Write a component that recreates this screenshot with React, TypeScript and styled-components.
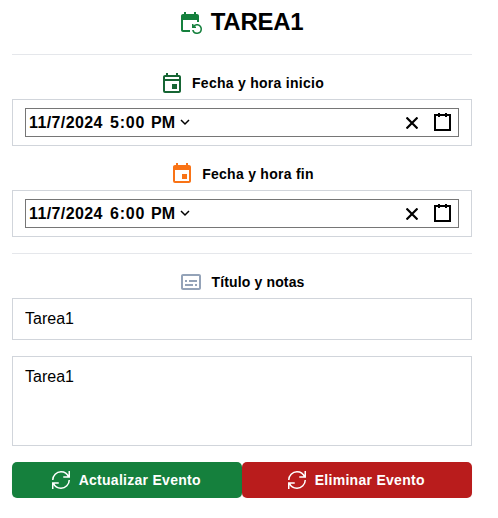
import React from "react";
import styled, { createGlobalStyle } from "styled-components";
import { MdEvent, MdEventRepeat, MdOutlineEvent, MdOutlineSubtitles } from "react-icons/md";
import { GrUpdate } from "react-icons/gr";

const GlobalStyle = createGlobalStyle`
  *, *::before, *::after { box-sizing: border-box; }
  body {
    margin: 0;
    background: #fff;
    color: #000;
    font-family: "Liberation Sans", Arial, sans-serif;
    font-size: 16px;
    line-height: 24px;
  }
`;

const Form = styled.form`
  display: flex;
  flex-direction: column;
  width: 484px;
  padding: 6px 12px 0;
`;

const Title = styled.h1`
  display: flex;
  align-items: center;
  justify-content: center;
  gap: 9px;
  height: 32px;
  margin: 0;
  padding-right: 3px;
  font-size: 24px;
  line-height: 32px;
  font-weight: 700;
  letter-spacing: -0.3px;
  svg { color: #15803d; }
`;

const Divider = styled.hr`
  width: 100%;
  height: 1px;
  margin: 16px 0 0;
  border: 0;
  background: #e5e7eb;
`;

const Label = styled.div<{ $tone: string; $tracking?: string }>`
  display: flex;
  align-items: center;
  justify-content: center;
  gap: 8px;
  height: 24px;
  margin: 16px 0 4px;
  font-size: 14px;
  font-weight: 700;
  letter-spacing: ${(p) => p.$tracking ?? "0.27px"};
  svg { color: ${(p) => p.$tone}; }
`;

const DateFrame = styled.div`
  height: 47px;
  padding: 8px 12px;
  border: 1px solid #d1d5db;
`;

const DateField = styled.div`
  display: flex;
  align-items: center;
  height: 29px;
  padding: 0 7px 0 3px;
  border: 1px solid #767676;
  font-weight: 700;
`;

const DatePart = styled.span<{ $width: number; $tracking: number }>`
  flex: none;
  width: ${(p) => p.$width}px;
  letter-spacing: ${(p) => p.$tracking}px;
  white-space: nowrap;
`;

const FieldIcon = styled.svg<{ $left?: string; $lift?: number }>`
  flex: none;
  margin-left: ${(p) => p.$left ?? "0"};
  margin-bottom: ${(p) => p.$lift ?? 0}px;
  fill: none;
  stroke: #000;
`;

const TitleInput = styled.input`
  height: 42px;
  padding: 8px 12px;
  border: 1px solid #d1d5db;
  border-radius: 0;
  font: inherit;
  color: #000;
  outline: none;
`;

const Notes = styled.textarea`
  height: 90px;
  margin-top: 16px;
  padding: 8px 12px;
  border: 1px solid #d1d5db;
  border-radius: 0;
  font: inherit;
  color: #000;
  resize: none;
  outline: none;
`;

const Actions = styled.div`
  display: grid;
  grid-template-columns: 1fr 1fr;
  margin-top: 16px;
`;

const Button = styled.button<{ $color: string }>`
  display: flex;
  align-items: center;
  justify-content: center;
  gap: 8.5px;
  height: 36px;
  padding: 0 1px 0 0;
  border: 0;
  border-radius: 5px;
  background: ${(p) => p.$color};
  color: #fff;
  font: 700 14px/20px "Liberation Sans", Arial, sans-serif;
  letter-spacing: 0.28px;
  box-shadow: 0 1px 2px rgba(0, 0, 0, 0.05);
  svg path, svg polyline { stroke: #fff; }
`;

function DateTime({ date, time, period }: { date: string; time: string; period: string }) {
  return (
    <DateFrame>
      <DateField>
        <DatePart $width={81} $tracking={0.4}>{date}</DatePart>
        <DatePart $width={41} $tracking={0.8}>{time}</DatePart>
        <DatePart $width={25} $tracking={0.2}>{period}</DatePart>
        <FieldIcon $left="4px" $lift={1} width="10" height="8" viewBox="0 0 10 8" strokeWidth="1.5">
          <path d="M1 2 5 6 9 2" />
        </FieldIcon>
        <FieldIcon $left="auto" width="12" height="12" viewBox="0 0 12 12" strokeWidth="2.2">
          <path d="M.5.5 11.5 11.5M11.5.5.5 11.5" />
        </FieldIcon>
        <FieldIcon $left="16px" $lift={1} width="17" height="18" viewBox="0 0 17 18" strokeWidth="2" shapeRendering="crispEdges">
          <path d="M1 2H16V17H1ZM5 0V4M12 0V4" />
        </FieldIcon>
      </DateField>
    </DateFrame>
  );
}

export default function App() {
  return (
    <>
      <GlobalStyle />
      <Form onSubmit={(e) => e.preventDefault()}>
        <Title><MdEventRepeat size={24} />TAREA1</Title>
        <Divider />
        <Label $tone="#166534"><MdOutlineEvent size={24} />Fecha y hora inicio</Label>
        <DateTime date="11/7/2024" time="5:00" period="PM" />
        <Label $tone="#f97316"><MdEvent size={24} />Fecha y hora fin</Label>
        <DateTime date="11/7/2024" time="6:00" period="PM" />
        <Divider />
        <Label $tone="#94a3b8" $tracking="0.15px"><MdOutlineSubtitles size={24} />Título y notas</Label>
        <TitleInput defaultValue="Tarea1" />
        <Notes defaultValue="Tarea1" />
        <Actions>
          <Button type="button" $color="#15803d"><GrUpdate size={18} />Actualizar Evento</Button>
          <Button type="button" $color="#b91c1c"><GrUpdate size={18} />Eliminar Evento</Button>
        </Actions>
      </Form>
    </>
  );
}
